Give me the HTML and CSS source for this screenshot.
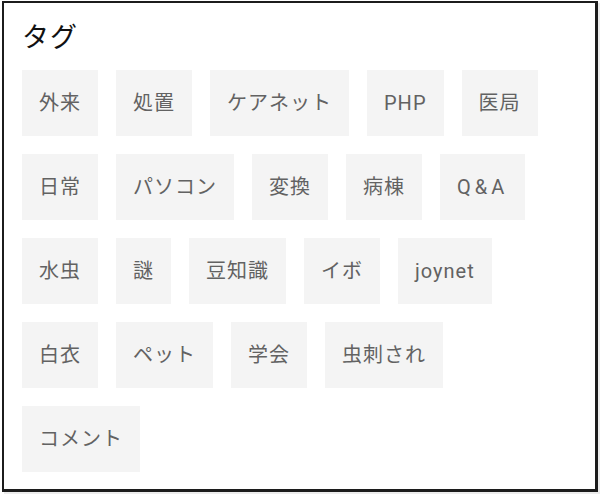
FILE: index.html
```html
<!DOCTYPE html>
<html lang="ja">
<head>
<meta charset="utf-8">
<link rel="stylesheet" href="styles.css">
</head>
<body>
<section class="widget">
  <h2 class="title">タグ</h2>
  <ul class="tags">
    <li class="tag">外来</li>
    <li class="tag">処置</li>
    <li class="tag">ケアネット</li>
    <li class="tag">PHP</li>
    <li class="tag">医局</li>
    <li class="tag">日常</li>
    <li class="tag">パソコン</li>
    <li class="tag">変換</li>
    <li class="tag">病棟</li>
    <li class="tag">Q&amp;A</li>
    <li class="tag">水虫</li>
    <li class="tag">謎</li>
    <li class="tag">豆知識</li>
    <li class="tag">イボ</li>
    <li class="tag">joynet</li>
    <li class="tag">白衣</li>
    <li class="tag">ペット</li>
    <li class="tag">学会</li>
    <li class="tag">虫刺され</li>
    <li class="tag">コメント</li>
  </ul>
</section>
</body>
</html>
```
FILE: styles.css
```css
html, body {
  margin: 0;
  padding: 0;
  background: #ffffff;
}
body {
  width: 600px;
  height: 494px;
  overflow: hidden;
  font-family: Roboto, "Noto Sans CJK JP", sans-serif;
}
.widget {
  box-sizing: border-box;
  margin: 1px 0 0 2px;
  width: 596px;
  height: 491px;
  border: 2px solid #1c1c1c;
  border-right-width: 3px;
  border-bottom-width: 3px;
  padding: 13px 18px 0 18px;
  background: #fff;
  box-shadow: 2px 2px 0 #ececec;
}
.title {
  margin: 0 0 14px 0;
  font-family: "Noto Sans CJK JP", sans-serif;
  font-weight: 400;
  font-size: 27px;
  line-height: 40px;
  letter-spacing: 1px;
  color: #111;
}
.tags {
  list-style: none;
  margin: 0;
  padding: 0;
  display: flex;
  flex-wrap: wrap;
  gap: 18px;
}
.tag {
  background: #f4f4f4;
  color: #626262;
  font-size: 20px;
  line-height: 32px;
  letter-spacing: 1px;
  padding: 17px 17px 17px 17px;
}
.tag:nth-child(10) {
  letter-spacing: 4px;
}
```
